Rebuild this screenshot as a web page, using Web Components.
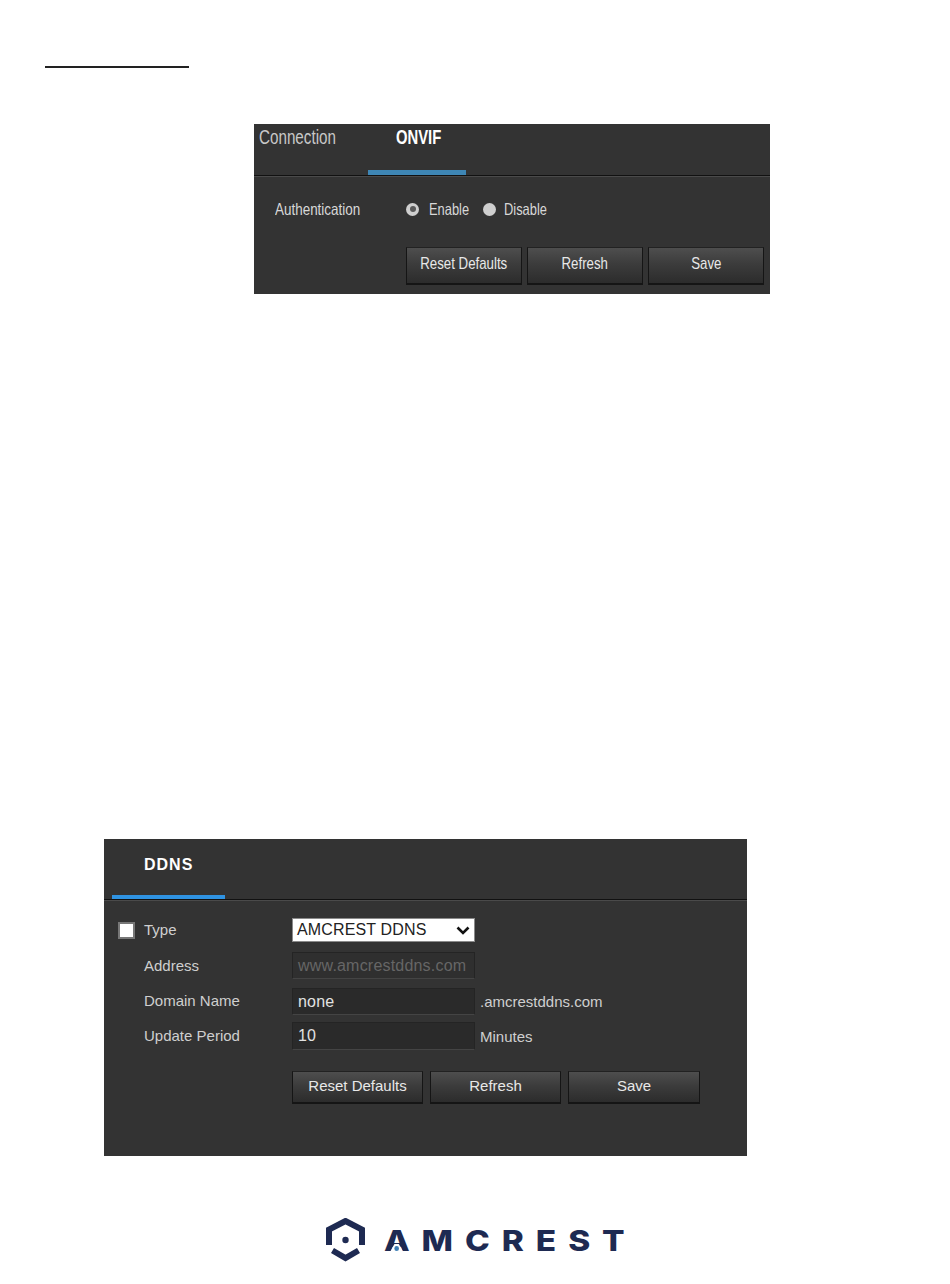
<!DOCTYPE html>
<html lang="en">
<head>
<meta charset="utf-8">
<title>Amcrest manual page</title>
<style>
  html, body { margin: 0; background: #fff; }
  body { font-family: "Liberation Sans", Arial, sans-serif; width: 950px; height: 1284px; overflow: hidden; }
  .heading-rule { display: block; margin: 66px 0 0 45px; width: 144px; height: 2px; background: #222; }
  #onvif { margin: 56px 0 0 254px; width: 516px; height: 170px; }
  #ddns { margin: 545px 0 0 104px; width: 643px; height: 317px; }
  amc-logo { margin: 62px 0 0 326px; }
</style>
</head>
<body>
<span class="heading-rule"></span>

<amc-panel id="onvif">
  <amc-tabs bar-left="114" bar-width="98" bar-color="#3e86b5" bar-height="5" height="51">
    <amc-tab style="margin-left:5px;width:137px"><squish-text>Connection</squish-text></amc-tab>
    <amc-tab active><squish-text>ONVIF</squish-text></amc-tab>
  </amc-tabs>
  <onvif-form></onvif-form>
</amc-panel>

<amc-panel id="ddns">
  <amc-tabs bar-left="8" bar-width="113" bar-color="#2f93e2" bar-height="4" height="60">
    <amc-tab active ddns style="margin-left:40px">DDNS</amc-tab>
  </amc-tabs>
  <ddns-form></ddns-form>
</amc-panel>

<amc-logo></amc-logo>

<script>
// Small helper so each element below only has to declare its template
function shadow(el, html) {
  el.attachShadow({ mode: 'open' }).innerHTML = html;
}

// The ONVIF screenshot is squeezed sideways, so its text is too
class SquishText extends HTMLElement {
  connectedCallback() {
    shadow(this, `
      <style>
        :host { display: inline-block; white-space: nowrap; transform: scaleX(var(--sx, .78));
                transform-origin: var(--sx-origin, left center); }
      </style>
      <slot></slot>`);
  }
}
customElements.define('squish-text', SquishText);

class AmcPanel extends HTMLElement {
  connectedCallback() {
    shadow(this, `
      <style>
        :host { display: flex; flex-direction: column; background: #333; color: #ddd; overflow: hidden; }
      </style>
      <slot></slot>`);
  }
}
customElements.define('amc-panel', AmcPanel);

class AmcTabs extends HTMLElement {
  connectedCallback() {
    const h = this.getAttribute('height');
    const left = this.getAttribute('bar-left');
    const w = this.getAttribute('bar-width');
    const color = this.getAttribute('bar-color');
    const barH = this.getAttribute('bar-height');
    shadow(this, `
      <style>
        :host { display: flex; flex: none; position: relative; height: ${h}px;
                border-bottom: 1px solid #111; box-shadow: 0 1px 0 #4a4a4a; }
        .bar { position: absolute; left: ${left}px; width: ${w}px; bottom: 0; height: ${barH}px; background: ${color}; }
      </style>
      <slot></slot>
      <div class="bar"></div>`);
  }
}
customElements.define('amc-tabs', AmcTabs);

class AmcTab extends HTMLElement {
  connectedCallback() {
    const active = this.hasAttribute('active');
    const ddns = this.hasAttribute('ddns');
    shadow(this, `
      <style>
        :host { display: block; color: ${active ? '#fff' : '#c8c8c8'};
                font-size: ${ddns ? 16 : 19.5}px; font-weight: ${active ? 700 : 400};
                letter-spacing: ${ddns ? '1px' : '0'};
                padding-top: ${ddns ? 16 : 3}px; line-height: 20px; --sx: ${active ? .76 : .78}; }
      </style>
      <slot></slot>`);
  }
}
customElements.define('amc-tab', AmcTab);

class AmcButton extends HTMLElement {
  connectedCallback() {
    shadow(this, `
      <style>
        :host { display: flex; align-items: center; justify-content: center; box-sizing: border-box;
                height: var(--btn-h, 33px); color: #e8e8e8; font-size: var(--btn-fs, 15px);
                padding-bottom: 3px; --sx-origin: center;
                background: linear-gradient(#4e4e4e, #3c3c3c 45%, #2c2c2c);
                border: 1px solid #151515; border-top-color: #222; border-bottom-width: 2px; }
      </style>
      <slot></slot>`);
  }
}
customElements.define('amc-button', AmcButton);

class AmcRadio extends HTMLElement {
  connectedCallback() {
    const on = this.hasAttribute('checked');
    shadow(this, `
      <style>
        :host { display: inline-flex; align-items: center; gap: var(--radio-gap, 10px); font-size: 16.5px; color: #d8d8d8; }
        .dot { width: 13px; height: 13px; border-radius: 50%; background: #cfcfcf; display: grid; place-items: center; flex: none; }
        .dot i { width: 6px; height: 6px; border-radius: 50%; background: #5a5a5a; }
      </style>
      <span class="dot">${on ? '<i></i>' : ''}</span><slot></slot>`);
  }
}
customElements.define('amc-radio', AmcRadio);

class AmcInput extends HTMLElement {
  connectedCallback() {
    const off = this.hasAttribute('disabled');
    shadow(this, `
      <style>
        :host { display: flex; align-items: center; box-sizing: border-box; width: 183px; height: var(--input-h, 27px); padding: 0 5px;
                background: ${off ? '#2f2f2f' : '#2a2a2a'}; border: 1px solid #242424; border-bottom-color: #444;
                color: ${off ? '#666' : '#e2e2e2'}; font-size: 16px; letter-spacing: .2px; white-space: nowrap; }
      </style>
      <slot></slot>`);
  }
}
customElements.define('amc-input', AmcInput);

class AmcSelect extends HTMLElement {
  connectedCallback() {
    shadow(this, `
      <style>
        :host { display: flex; align-items: center; justify-content: space-between; box-sizing: border-box;
                width: 183px; height: 24px; padding: 0 4px; background: #fff; border: 1px solid #8a8a8a;
                color: #222; font-size: 16px; letter-spacing: .15px; white-space: nowrap; }
        svg { display: block; }
      </style>
      <slot></slot>
      <svg width="14" height="9" viewBox="0 0 14 9"><path d="M1.5 1.5 7 7l5.5-5.5" fill="none" stroke="#111" stroke-width="2.6"/></svg>`);
  }
}
customElements.define('amc-select', AmcSelect);

class OnvifForm extends HTMLElement {
  connectedCallback() {
    shadow(this, `
      <style>
        :host { display: block; padding: 23px 6px 0 152px; font-size: 16.5px; color: #d8d8d8;
                --btn-h: 38px; --btn-fs: 17px; }
        .row { display: flex; align-items: center; height: 20px; }
        .label { margin-left: -131px; width: 131px; --sx: .815; }
        amc-radio { width: 77px; }
        amc-radio + amc-radio { --radio-gap: 8px; }
        .btns { display: grid; grid-template-columns: repeat(3, 116px); gap: 5px; margin-top: 28px; }
      </style>
      <div class="row"><span class="label"><squish-text>Authentication</squish-text></span>
        <amc-radio checked><squish-text>Enable</squish-text></amc-radio><amc-radio><squish-text>Disable</squish-text></amc-radio></div>
      <div class="btns">
        <amc-button><squish-text>Reset Defaults</squish-text></amc-button>
        <amc-button><squish-text>Refresh</squish-text></amc-button>
        <amc-button><squish-text>Save</squish-text></amc-button>
      </div>`);
  }
}
customElements.define('onvif-form', OnvifForm);

class DdnsForm extends HTMLElement {
  connectedCallback() {
    shadow(this, `
      <style>
        :host { display: block; padding: 18px 0 0 14px; font-size: 15px; color: #cfcfcf; }
        .row { display: grid; grid-template-columns: 26px 148px 183px auto; align-items: center; }
        .box { width: 13px; height: 13px; background: #fff; border: 2px solid #777; }
        .up { padding-bottom: 2px; }
        .unit { padding-left: 5px; }
        .btns { display: grid; grid-template-columns: 131px 131px 132px; gap: 7px; margin: 21px 0 0 174px; }
      </style>
      <div class="row"><span class="box"></span><span class="up">Type</span><amc-select>AMCREST DDNS</amc-select></div>
      <div class="row" style="margin-top:10px"><span></span><span>Address</span><amc-input disabled>www.amcrestddns.com</amc-input></div>
      <div class="row" style="margin-top:9px"><span></span><span class="up">Domain Name</span><amc-input>none</amc-input><span class="unit">.amcrestddns.com</span></div>
      <div class="row" style="margin-top:7px;--input-h:28px"><span></span><span class="up">Update Period</span><amc-input>10</amc-input><span class="unit">Minutes</span></div>
      <div class="btns"><amc-button>Reset Defaults</amc-button><amc-button>Refresh</amc-button><amc-button>Save</amc-button></div>`);
  }
}
customElements.define('ddns-form', DdnsForm);

class AmcLogo extends HTMLElement {
  connectedCallback() {
    shadow(this, `
      <style>
        :host { display: flex; align-items: center; gap: 19px; color: #1e2a52; }
        svg { display: block; flex: none; }
        .word { position: relative; font-family: Inter, "Liberation Sans", sans-serif; font-weight: 800;
                font-size: 29px; line-height: 40px; letter-spacing: 10.4px; white-space: nowrap;
                transform: scaleX(1.15); transform-origin: left center; }
        /* the logo's A has a dot where the crossbar would be */
        .gap { position: absolute; left: 5px; top: 23px; width: 12px; height: 9px; background: #fff;
               clip-path: polygon(36% 0, 64% 0, 100% 100%, 0 100%); }
        .pip { position: absolute; left: 8.9px; top: 25px; width: 4.4px; height: 5px; border-radius: 50%; background: #3f7fb5; }
      </style>
      <svg width="39" height="45" viewBox="0 0 39 45">
        <path d="M3 27V11.5L19.5 3 36 11.5V27" fill="none" stroke="#1e2a52" stroke-width="6"/>
        <path d="M6.5 32.5 19.5 40l13-7.5" fill="none" stroke="#1e2a52" stroke-width="6"/>
        <circle cx="19.5" cy="22" r="3.2" fill="#1e2a52"/>
      </svg>
      <span class="word">AMCREST<span class="gap"></span><span class="pip"></span></span>`);
  }
}
customElements.define('amc-logo', AmcLogo);
</script>
</body>
</html>
